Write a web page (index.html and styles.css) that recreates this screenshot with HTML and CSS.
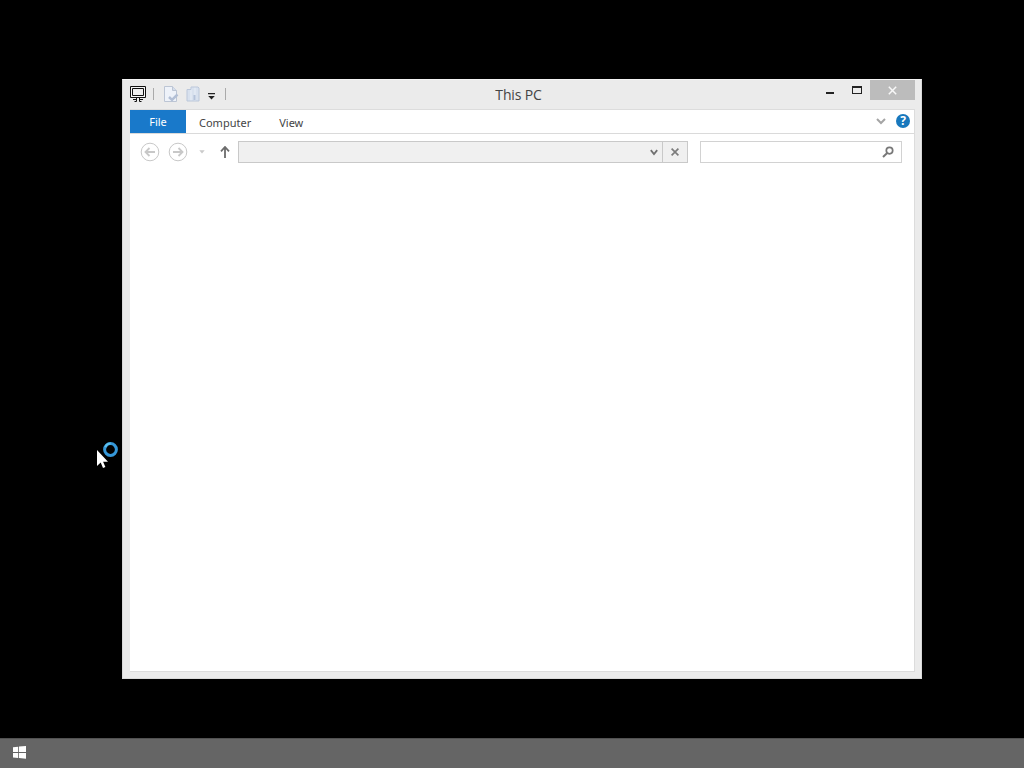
FILE: index.html
```html
<!DOCTYPE html>
<html lang="en">
<head>
    <meta charset="UTF-8">
    <meta name="viewport" content="width=device-width, initial-scale=1.0">
    <title>This PC</title>
    <link rel="stylesheet" href="styles.css">
</head>
<body>
    <main class="desktop">
        <section class="window">
            <header class="titlebar">
                <div class="quick-access">
                    <svg class="icon-pc" width="16" height="16" viewBox="0 0 16 16" fill="none" stroke="#111">
                        <path d="M.5.5h15v11H.5z" fill="#f6f6f6"/>
                        <path d="M2.500 2.500h11v7h-11z" fill="#eee"/>
                        <path d="M6.500 12v2M9.500 12v2M3 13.500h3.500M9.500 13.500H13M4.500 15.500h2v-1.500M11.500 15.500h-2v-1.500"/>
                    </svg>
                    <span class="separator"></span>
                    <svg class="icon-properties" width="16" height="18" viewBox="0 0 16 18">
                        <path d="M1.500 1.500h8l4 4v11h-12z" fill="#eef2f9" stroke="#bcc5d4"/>
                        <path d="M9.500 1.500v4h4" fill="#d5deeb" stroke="#bcc5d4"/>
                        <path d="M6 12l3 2.800 5.500-5.300" fill="none" stroke="#b2bfd5" stroke-width="2.500"/>
                    </svg>
                    <svg class="icon-folder" width="14" height="16" viewBox="0 0 14 16">
                        <path d="M1 3.500h4V1h7l1 1v13H1z" fill="#d8e1ee"/>
                        <path d="M5 1v14M9 1v14" stroke="#e8eef7"/>
                        <path d="M1 3.500h4V1h7l1 1v13H1z" fill="none" stroke="#bbc7da"/>
                        <path d="M8.500 9v5" stroke="#b5c3da" stroke-width="2"/>
                    </svg>
                    <svg class="icon-customize" width="8" height="7" viewBox="0 0 8 7">
                        <path d="M0 0h7v1.300H0zM.2 3h6.600L3.500 6.500z" fill="#222"/>
                    </svg>
                    <span class="separator"></span>
                </div>
                <h1 class="title">This PC</h1>
                <div class="controls">
                    <span class="minimize"></span>
                    <span class="maximize"></span>
                    <span class="close">
                        <svg width="9" height="9" viewBox="0 0 9 9" stroke="#f8f8f8" stroke-width="1.500">
                            <path d="M.8.8l7.400 7.400M8.200.8L.8 8.200"/>
                        </svg>
                    </span>
                </div>
            </header>
            <div class="content">
                <nav class="ribbon">
                    <a class="tab tab-file">File</a>
                    <a class="tab tab-computer">Computer</a>
                    <a class="tab tab-view">View</a>
                    <svg class="expand" width="10" height="7" viewBox="0 0 10 7" fill="none" stroke="#a5a5a5" stroke-width="2">
                        <path d="M1 1l4 4 4-4"/>
                    </svg>
                    <span class="help">?</span>
                </nav>
                <div class="navbar">
                    <svg class="back" width="20" height="20" viewBox="0 0 20 20" fill="none" stroke="#c8c8c8">
                        <circle cx="10" cy="10" r="8.800"/>
                        <path d="M15 10H6M9.500 6l-4 4 4 4" stroke-width="1.800"/>
                    </svg>
                    <svg class="forward" width="20" height="20" viewBox="0 0 20 20" fill="none" stroke="#c8c8c8">
                        <circle cx="10" cy="10" r="8.800"/>
                        <path d="M5 10h9M10.500 6l4 4-4 4" stroke-width="1.800"/>
                    </svg>
                    <svg class="recent" width="6" height="4" viewBox="0 0 6 4">
                        <path d="M.3.3h5.400L3 3.500z" fill="#cacaca"/>
                    </svg>
                    <svg class="up" width="10" height="13" viewBox="0 0 10 13" fill="none" stroke="#6c6c6c" stroke-width="1.800">
                        <path d="M5 12V1.500M1 5.300L5 1l4 4.300"/>
                    </svg>
                    <div class="address">
                        <svg class="address-arrow" width="8" height="7" viewBox="0 0 8 7" fill="none" stroke="#707070" stroke-width="1.800">
                            <path d="M.8 1.200L4 5l3.200-3.800"/>
                        </svg>
                        <span class="stop">
                            <svg width="8" height="8" viewBox="0 0 8 8" stroke="#7c7c7c" stroke-width="1.700">
                                <path d="M.6.6l6.800 6.800M7.400.6L.6 7.400"/>
                            </svg>
                        </span>
                    </div>
                    <div class="search">
                        <svg width="12" height="12" viewBox="0 0 12 12" fill="none" stroke="#777">
                            <circle cx="7.500" cy="4.600" r="3.200" stroke-width="1.700"/>
                            <path d="M5.200 7L1 11" stroke-width="2"/>
                        </svg>
                    </div>
                </div>
            </div>
        </section>
        <svg class="cursor" width="24" height="28" viewBox="0 0 24 28">
            <path d="M1 9v16l3.700-3.500L7 27l2.400-1-2.300-5.300H12z" fill="#fff"/>
            <circle cx="14.500" cy="8.500" r="5.900" fill="none" stroke="#3597d8" stroke-width="3"/>
            <path d="M9.200 6A5.900 5.900 0 0 1 14.500 2.600" fill="none" stroke="#5cc0ee" stroke-width="2"/>
        </svg>
    </main>
    <footer class="taskbar">
        <svg class="start" width="13" height="13" viewBox="0 0 13 13" fill="#fff">
            <path d="M0 1.200L5.200.7V6H0zM6 .6L13 0v6H6zM0 6.900h5.200V12L0 11.500zM6 6.900h7v5.900l-7-.7z"/>
        </svg>
    </footer>
</body>
</html>
```
FILE: styles.css
```css
html {
    box-sizing: border-box;
    font-family: "Noto Sans", "Open Sans", sans-serif;
    font-size: 11px;
}

*,
*:before,
*:after {
    box-sizing: inherit;
}

body {
    margin: 0;
    height: 100vh;
    display: flex;
    flex-direction: column;
    background-color: #000;
    overflow: hidden;
}

svg {
    display: block;
    flex-shrink: 0;
}

.desktop {
    flex-grow: 1;
    padding: 79px 0 0 122px;
}

.window {
    width: 800px;
    height: 600px;
    padding: 0 6px 6px 7px;
    display: flex;
    flex-direction: column;
    background-color: #ebebeb;
    border: 1px solid #dadada;
    border-top-color: #f4f4f4;
}

.titlebar {
    height: 29px;
    display: grid;
    grid-template-columns: 1fr auto 1fr;
}

.quick-access {
    display: flex;
    align-items: center;
    padding-bottom: 1px;
}

.separator {
    width: 1px;
    height: 12px;
    background-color: #aaa;
}

.quick-access .separator {
    margin-left: 7px;
}

.icon-properties {
    margin-left: 9px;
}

.icon-folder {
    margin-left: 7px;
}

.icon-customize {
    margin: 4px 2px 0 8px;
}

.quick-access .separator:last-child {
    margin-left: 7px;
}

.title {
    margin: 0;
    padding-right: 8px;
    font-family: "Open Sans", "Noto Sans", sans-serif;
    font-size: 14px;
    font-weight: 400;
    line-height: 29px;
    letter-spacing: -.15px;
    color: #444;
}

.controls {
    display: flex;
    justify-content: flex-end;
}

.minimize {
    width: 8px;
    height: 2px;
    margin-top: 12px;
    background-color: #222;
}

.maximize {
    width: 10px;
    height: 8px;
    margin: 6px 8px 0 18px;
    border: 1px solid #222;
    border-top-width: 2px;
}

.close {
    width: 45px;
    height: 20px;
    display: flex;
    align-items: center;
    justify-content: center;
    background-color: #bcbcbc;
}

.content {
    flex-grow: 1;
    background-color: #fff;
    border: 1px solid #dcdcdc;
    border-left-width: 0;
}

.ribbon {
    height: 24px;
    display: flex;
    align-items: center;
    border-bottom: 1px solid #dadada;
}

.tab {
    line-height: 24px;
    color: #444;
}

.tab-file {
    width: 56px;
    height: 23px;
    text-align: center;
    background-color: #1979ca;
    color: #fff;
}

.tab-computer {
    margin-left: 13px;
    padding-top: 2px;
}

.tab-view {
    margin-left: 28px;
    padding-top: 2px;
}

.expand {
    margin-left: auto;
}

.help {
    width: 14px;
    height: 14px;
    margin: 0 4px 1px 10px;
    border-radius: 50%;
    background-color: #1878bd;
    color: #fff;
    font-size: 12px;
    font-weight: 700;
    line-height: 14px;
    text-align: center;
}

.navbar {
    height: 36px;
    display: flex;
    align-items: center;
    padding-left: 10px;
}

.forward {
    margin-left: 8px;
}

.recent {
    margin-left: 11px;
}

.up {
    margin-left: 15px;
}

.address {
    width: 450px;
    height: 22px;
    margin-left: 8px;
    display: flex;
    align-items: center;
    justify-content: flex-end;
    background-color: #f0f0f0;
    border: 1px solid #c9c9c9;
}

.address-arrow {
    margin-right: 4px;
}

.stop {
    width: 25px;
    height: 20px;
    display: flex;
    align-items: center;
    justify-content: center;
    border-left: 1px solid #c9c9c9;
}

.search {
    width: 202px;
    height: 22px;
    margin-left: 12px;
    padding-right: 7px;
    display: flex;
    align-items: center;
    justify-content: flex-end;
    border: 1px solid #d2d2d2;
}

.cursor {
    position: absolute;
    left: 96px;
    top: 441px;
}

.taskbar {
    height: 30px;
    padding: 0 0 2px 13px;
    display: flex;
    align-items: center;
    background-color: #656565;
    border-top: 1px solid #515151;
}
```
